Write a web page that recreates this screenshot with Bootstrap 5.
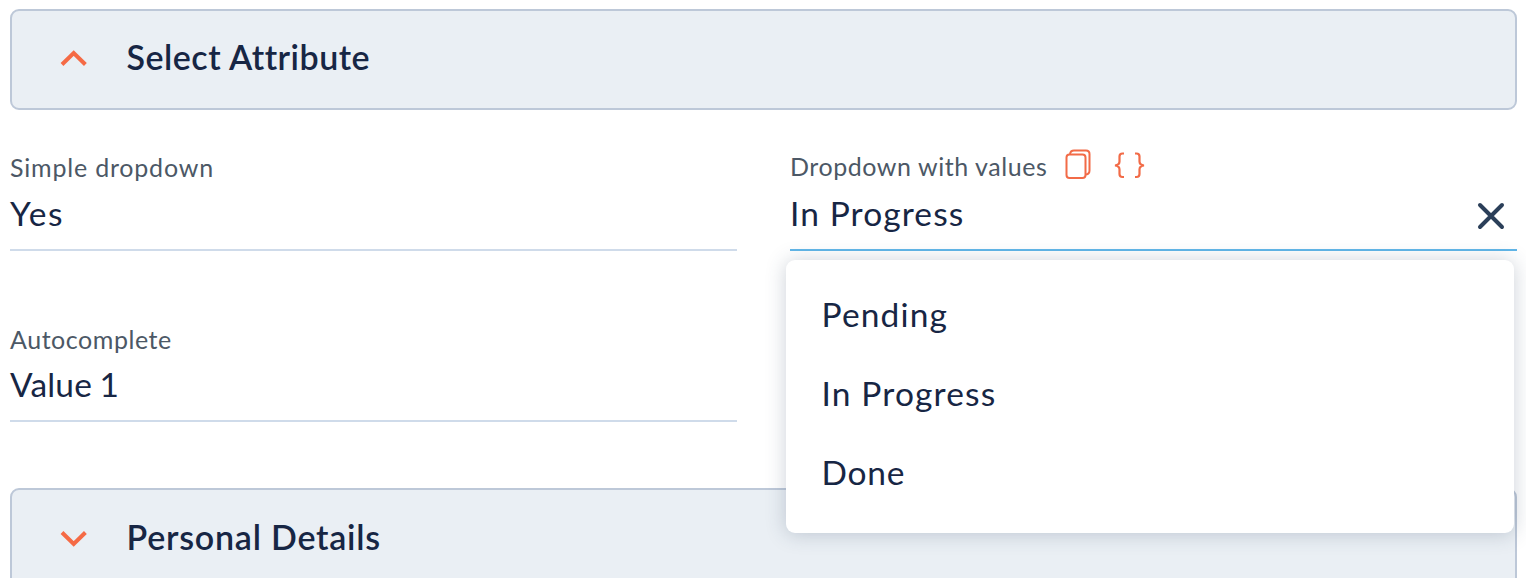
<!DOCTYPE html>
<html lang="en">
<head>
<meta charset="utf-8">
<meta name="viewport" content="width=device-width, initial-scale=1">
<title>Attributes</title>
<link href="https://cdn.jsdelivr.net/npm/bootstrap@5.3.0/dist/css/bootstrap.min.css" rel="stylesheet">
<style>
body{font-family:Lato,"Open Sans",sans-serif;color:#172644;background:#fff;height:578px;overflow:hidden;padding:9px 9px 0 10px}
.panel-bar{height:101px;border:2px solid #bdc8d8;border-radius:9px;background:#eaeff4;padding:0 48px 5px}
.panel-bar.closed{padding-bottom:3px}
.panel-bar svg{width:28px;height:20px;margin-right:38.5px}
.panel-title{font-size:34px;line-height:40px;font-weight:600;margin:0;padding-bottom:1px;letter-spacing:.5px}
.title-wide{letter-spacing:.77px}
.fields{display:grid;grid-template-columns:727px 727px;column-gap:53px;padding-top:40px;height:378px;grid-template-rows:172px 171px}
.field{position:relative}
.field-label{height:32px;line-height:34px;font-size:25px;color:#4c5866;letter-spacing:.55px}
.label-wide{letter-spacing:.8px}
.field-value{height:69px;font-size:33.5px;line-height:62px;border-bottom:2px solid #cfdbea;letter-spacing:1.1px}
.value-short{letter-spacing:1.6px}
.field.late .field-value{height:68px;line-height:60px;letter-spacing:.2px;word-spacing:-1.5px}
.field.active .field-value{border-color:#61b6e8}
.options{position:absolute;left:-4px;top:110px;width:728px;height:273px;padding:15px 35.5px;border-radius:9px;background:#fff;box-shadow:0 1px 20px rgba(50,70,100,.25);font-size:33.5px;letter-spacing:1.15px;z-index:2}
.options li{height:79px;line-height:79px}
.options li:last-child{letter-spacing:.8px}
.copy-icon{margin-left:17px}.brace-icon{margin-left:22px}
.copy-icon,.brace-icon{margin-top:-3px}
.clear-icon{margin:20px 12px 0 0}
</style>
<script src="https://cdn.jsdelivr.net/npm/bootstrap@5.3.0/dist/js/bootstrap.bundle.min.js"></script>
</head>
<body>
<section class="panel-bar d-flex align-items-center">
  <svg viewBox="0 0 28 20" fill="none" stroke="#f56a45" stroke-width="4"><path d="M2 17.5 13.7 6 25.4 17.5"/></svg>
  <h2 class="panel-title">Select Attribute</h2>
</section>
<main class="fields">
  <div class="field">
    <div class="field-label label-wide">Simple dropdown</div>
    <div class="field-value value-short">Yes</div>
  </div>
  <div class="field active">
    <div class="field-label d-flex align-items-center">Dropdown with values
      <svg class="copy-icon" width="28" height="32" viewBox="0 0 28 32" fill="none" stroke="#f26b47" stroke-width="2"><rect x="2.5" y="5.5" width="19" height="23.5" rx="3"/><path d="M6 5Q6.5 1.5 10 1.5H22Q25.5 1.5 25.5 5V21.5Q25.5 25 22 25.5"/></svg>
      <svg class="brace-icon" width="32" height="32" viewBox="0 0 32 32" fill="none" stroke="#f26b47" stroke-width="2.2"><path d="M10 4.5H8.5Q5.5 4.500 5.5 7.5V12.500Q5.5 16 1 16.500Q5.5 17 5.5 20.500V25Q5.5 28 8.5 28H10M21 4.5H22.5Q25.5 4.500 25.5 7.500V12.500Q25.5 16 30 16.500Q25.5 17 25.5 20.500V25Q25.5 28 22.5 28H21"/></svg>
    </div>
    <div class="field-value d-flex justify-content-between align-items-start">In Progress
      <svg class="clear-icon" width="28" height="28" viewBox="0 0 28 28" fill="none" stroke="#2b3f59" stroke-width="4" stroke-linecap="round"><path d="m3 3 22 22M25 3 3 25"/></svg>
    </div>
    <ul class="options list-unstyled mb-0">
      <li>Pending</li>
      <li>In Progress</li>
      <li>Done</li>
    </ul>
  </div>
  <div class="field late">
    <div class="field-label">Autocomplete</div>
    <div class="field-value">Value 1</div>
  </div>
</main>
<section class="panel-bar closed d-flex align-items-center">
  <svg viewBox="0 0 28 20" fill="none" stroke="#f56a45" stroke-width="4"><path d="M2 5.5 13.7 17 25.4 5.5"/></svg>
  <h2 class="panel-title title-wide">Personal Details</h2>
</section>
</body>
</html>
